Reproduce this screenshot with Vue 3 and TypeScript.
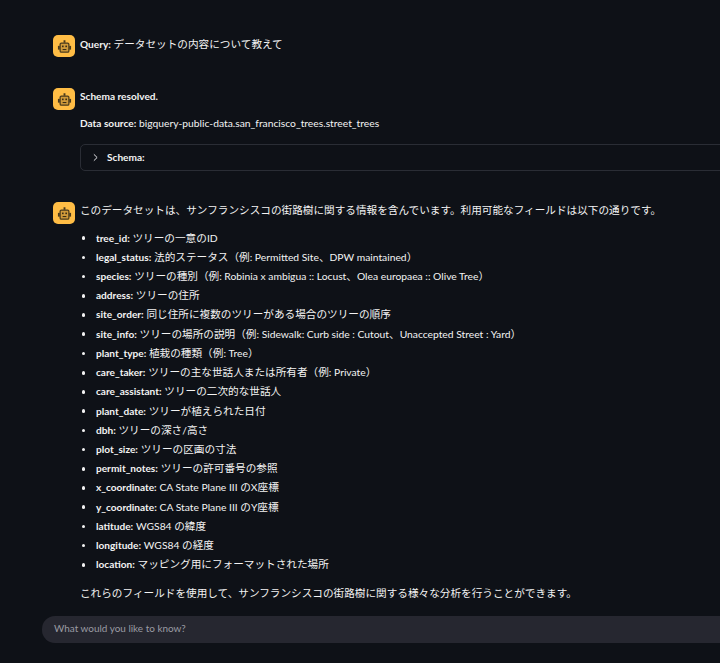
<script setup lang="ts">
const fields: [string, string][] = [
  ['tree_id', 'ツリーの一意のID'],
  ['legal_status', '法的ステータス（例: Permitted Site、DPW maintained）'],
  ['species', 'ツリーの種別（例: Robinia x ambigua :: Locust、Olea europaea :: Olive Tree）'],
  ['address', 'ツリーの住所'],
  ['site_order', '同じ住所に複数のツリーがある場合のツリーの順序'],
  ['site_info', 'ツリーの場所の説明（例: Sidewalk: Curb side : Cutout、Unaccepted Street : Yard）'],
  ['plant_type', '植栽の種類（例: Tree）'],
  ['care_taker', 'ツリーの主な世話人または所有者（例: Private）'],
  ['care_assistant', 'ツリーの二次的な世話人'],
  ['plant_date', 'ツリーが植えられた日付'],
  ['dbh', 'ツリーの深さ/高さ'],
  ['plot_size', 'ツリーの区画の寸法'],
  ['permit_notes', 'ツリーの許可番号の参照'],
  ['x_coordinate', 'CA State Plane III のX座標'],
  ['y_coordinate', 'CA State Plane III のY座標'],
  ['latitude', 'WGS84 の緯度'],
  ['longitude', 'WGS84 の経度'],
  ['location', 'マッピング用にフォーマットされた場所'],
]

// Latin runs are set slightly smaller than the Japanese around them.
function runs(text: string): { text: string; latin: boolean }[] {
  return (text.match(/[\x00-\x7f]+|[^\x00-\x7f]+/g) ?? []).map((t) => ({
    text: t,
    latin: t.charCodeAt(0) < 128,
  }))
}
</script>

<template>
  <div class="page">
    <svg class="defs" aria-hidden="true">
      <symbol id="bot" viewBox="0 0 24 24">
        <rect x="10.5" y="2" width="3" height="4" fill="#4a3a1c" />
        <rect x="1.5" y="11" width="3" height="6" fill="#4a3a1c" />
        <rect x="19.5" y="11" width="3" height="6" fill="#4a3a1c" />
        <rect x="5" y="6.5" width="14" height="14.5" rx="2" fill="#d09a3a" stroke="#4a3a1c" stroke-width="2" />
        <rect x="8" y="10.5" width="2.6" height="2.6" fill="#3a2d16" />
        <rect x="13.4" y="10.5" width="2.6" height="2.6" fill="#3a2d16" />
        <rect x="9" y="16" width="6" height="1.7" fill="#3a2d16" />
      </symbol>
    </svg>
    <main class="chat">
      <section class="msg first">
        <span class="avatar"><svg width="15" height="15"><use href="#bot" /></svg></span>
        <div class="body">
          <p class="query"><strong>Query:</strong> データセットの内容について教えて</p>
        </div>
      </section>

      <section class="msg second">
        <span class="avatar"><svg width="15" height="15"><use href="#bot" /></svg></span>
        <div class="body">
          <p class="resolved"><strong>Schema resolved.</strong></p>
          <p class="source"><strong>Data source:</strong> <span class="lat">bigquery-public-data.san_francisco_trees.street_trees</span></p>
          <div class="expander">
            <svg viewBox="0 0 10 10" width="9" height="9" aria-hidden="true">
              <path d="M3.2 1.5 6.8 5 3.2 8.5" fill="none" stroke="#e6e6ea" stroke-width="1.1" />
            </svg>
            <strong>Schema:</strong>
          </div>
        </div>
      </section>

      <section class="msg third">
        <span class="avatar"><svg width="15" height="15"><use href="#bot" /></svg></span>
        <div class="body">
          <p class="intro">このデータセットは、サンフランシスコの街路樹に関する情報を含んでいます。利用可能なフィールドは以下の通りです。</p>
          <ul>
            <li v-for="f in fields" :key="f[0]">
              <strong>{{ f[0] }}:</strong>{{ ' ' }}<span v-for="(r, i) in runs(f[1])" :key="i" :class="{ lat: r.latin }">{{ r.text }}</span>
            </li>
          </ul>
          <p class="outro">これらのフィールドを使用して、サンフランシスコの街路樹に関する様々な分析を行うことができます。</p>
        </div>
      </section>
    </main>
    <div class="input">What would you like to know?</div>
  </div>
</template>

<style>
html, body { margin: 0; background: #0e1117; overflow: hidden; }
</style>

<style scoped>
.page {
  width: 720px;
  height: 663px;
  overflow: hidden;
  background: #0e1117;
  color: #f3f3f3;
  font-family: Lato, "Noto Sans CJK JP", sans-serif;
  font-size: 10.64px;
  line-height: 19.18px;
  padding-left: 42px;
  box-sizing: border-box;
  display: flex;
  flex-direction: column;
}
.defs { width: 0; height: 0; flex: none; }
.chat { flex: 1; width: 720px; padding: 35px 0 0 11px; box-sizing: border-box; }
.msg { display: flex; gap: 5px; }
.second { margin-top: 31px; }
.third { margin-top: 31px; }
.avatar {
  width: 22px; height: 22px; flex: none; border-radius: 5px; background: #ffbd45;
  display: flex; align-items: center; justify-content: center;
}
.body { flex: 1; min-width: 0; }
p { margin: 0; }
strong { font-weight: 700; font-size: 10.1px; }
.lat { font-size: 10.3px; }
.query { margin-top: -1px; }
.resolved { margin-top: -2px; }
.source { margin-top: 7px; }
.expander {
  box-sizing: border-box;
  margin-top: 11px; height: 27px; border: 1px solid #2a2d35; border-radius: 5px;
  display: flex; align-items: center; gap: 7px; padding-left: 10px;
}
.intro { margin-top: -2px; }
ul { margin: 8px 0 0; padding: 0 0 0 16px; list-style: none; }
li { height: 19.22px; }
li::before {
  content: "";
  display: inline-block;
  width: 3.6px;
  height: 3.6px;
  border-radius: 50%;
  background: #f3f3f3;
  margin-left: -14.4px;
  margin-right: 10.8px;
  vertical-align: 1.6px;
}
.outro { margin-top: 9px; }
.input {
  width: 720px; height: 27px; margin-bottom: 20px; flex: none; border-radius: 13px;
  background: #262730; color: #9a9ba3; padding-left: 12px; box-sizing: border-box;
  line-height: 25px; font-size: 9.95px;
}
</style>
